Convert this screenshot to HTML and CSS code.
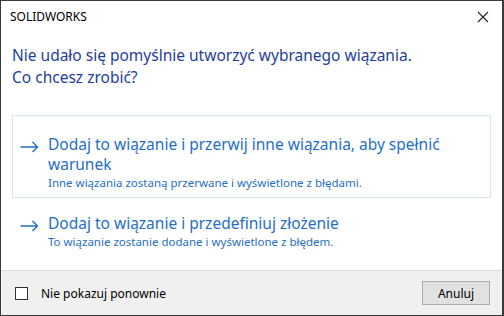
FILE: index.html
```html
<!DOCTYPE html>
<html lang="pl">
<head>
  <meta charset="UTF-8">
  <title>SOLIDWORKS</title>
  <link rel="stylesheet" href="styles.css">
</head>
<body>
  <div class="window">
    <div class="titlebar">
      <span class="title">SOLIDWORKS</span>
      <svg class="close" width="12" height="12" viewBox="0 0 12 12">
        <path d="M1 1 L11 11 M11 1 L1 11" stroke="#222" stroke-width="1.1" fill="none"/>
      </svg>
    </div>
    <div class="content">
      <h1 class="instruction">Nie udało się pomyślnie utworzyć wybranego wiązania.<br>Co chcesz zrobić?</h1>
      <div class="links">
        <div class="cmd-link hover">
          <svg class="arrow" width="19" height="12" viewBox="0 0 19 12">
            <path d="M0.5 6 H17.5 M12.5 1 L17.5 6 L12.5 11" stroke="#1f6fc4" stroke-width="1.4" fill="none"/>
          </svg>
          <div class="cmd-text">
            <div class="cmd-main">Dodaj to wiązanie i przerwij inne wiązania, aby spełnić warunek</div>
            <div class="cmd-note">Inne wiązania zostaną przerwane i wyświetlone z błędami.</div>
          </div>
        </div>
        <div class="cmd-link second">
          <svg class="arrow" width="19" height="12" viewBox="0 0 19 12">
            <path d="M0.5 6 H17.5 M12.5 1 L17.5 6 L12.5 11" stroke="#1f6fc4" stroke-width="1.4" fill="none"/>
          </svg>
          <div class="cmd-text">
            <div class="cmd-main">Dodaj to wiązanie i przedefiniuj złożenie</div>
            <div class="cmd-note">To wiązanie zostanie dodane i wyświetlone z błędem.</div>
          </div>
        </div>
      </div>
    </div>
    <div class="footer">
      <label class="check"><span class="box"></span>Nie pokazuj ponownie</label>
      <button class="btn">Anuluj</button>
    </div>
  </div>
</body>
</html>
```

FILE: styles.css
```css
body {
  margin: 0;
  font-family: "Noto Sans", "Open Sans", sans-serif;
  background: #fff;
}
.window {
  width: 504px;
  height: 316px;
  box-sizing: border-box;
  border: 1px solid #3a3a3a;
  border-right-width: 2px;
  display: flex;
  flex-direction: column;
  background: #fff;
}
.titlebar {
  height: 31px;
  display: flex;
  align-items: center;
  justify-content: space-between;
  padding: 0 13px 0 9px;
}
.title {
  font-size: 12px;
  color: #000;
}
.content {
  flex: 1;
  padding: 0 11px;
}
.instruction {
  margin: 12px 0 0 0;
  font-size: 15.5px;
  font-weight: normal;
  line-height: 22px;
  color: #1f3f9a;
}
.links {
  margin-top: 27px;
}
.cmd-link {
  display: flex;
  align-items: flex-start;
  padding: 18px 8px 5px 7px;
  border: 1px solid transparent;
}
.cmd-link.hover {
  border-color: #d6e6f5;
}
.cmd-link.second {
  padding-top: 14px;
}
.arrow {
  flex: none;
  margin: 7px 9px 0 0;
}
.cmd-main {
  font-size: 15.5px;
  line-height: 20px;
  color: #1f6fc4;
}
.cmd-note {
  font-size: 11.5px;
  line-height: 18px;
  color: #1f6fc4;
}
.footer {
  height: 44px;
  background: #f0f0f0;
  border-top: 1px solid #dfdfdf;
  display: flex;
  align-items: center;
  justify-content: space-between;
  padding: 0 12px 0 14px;
}
.check {
  display: flex;
  align-items: center;
  font-size: 12px;
  color: #000;
}
.box {
  width: 11px;
  height: 11px;
  border: 1px solid #333;
  background: #fff;
  margin-right: 13px;
}
.btn {
  width: 68px;
  height: 24px;
  font-family: inherit;
  font-size: 12px;
  background: #e1e1e1;
  border: 1px solid #adadad;
  color: #000;
  padding: 0;
}
```
